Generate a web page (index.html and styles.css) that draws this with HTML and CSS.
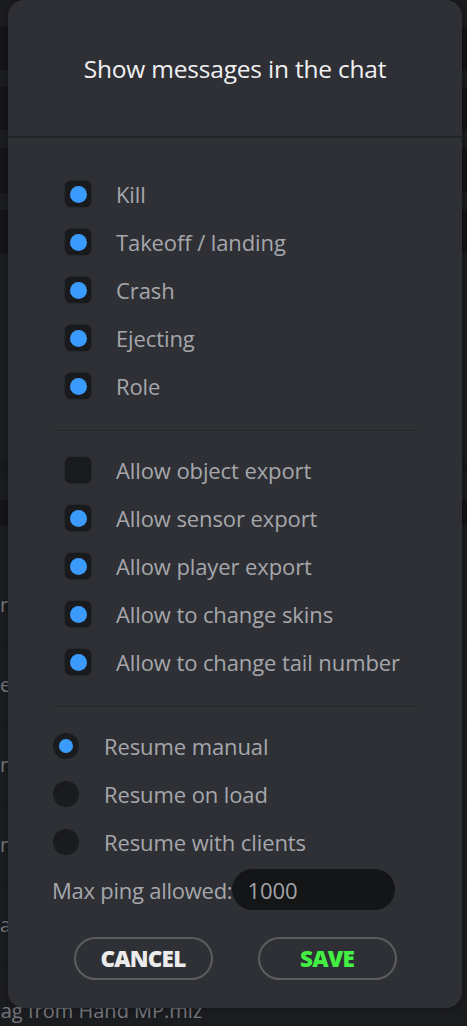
FILE: index.html
```html
<!DOCTYPE html>
<html>
<head>
<meta charset="utf-8">
<link rel="stylesheet" href="styles.css">
</head>
<body>
<div class="backdrop">
  <div class="band light h27"></div>
  <div class="band dark h43"></div>
  <div class="band light h17"></div>
  <div class="band dark h43"></div>
  <div class="band light h18"></div>
  <div class="band dark h45"></div>
  <div class="band light h17"></div>
  <div class="band dark h43"></div>
  <div class="band light h207"></div>
  <div class="band mid h13"></div>
  <div class="band light h27"></div>
  <div class="band dark h25"></div>
  <div class="band light h40"></div>
  <div class="brow">rank</div>
  <div class="brow">edit</div>
  <div class="brow">name</div>
  <div class="brow">name</div>
  <div class="brow">ag</div>
  <div class="brow last"><span class="cut">Dr</span>ag from Hand MP.miz</div>
</div>

<div class="modal">
  <div class="modal-head">
    <h1 class="title">Show messages in the chat</h1>
  </div>
  <div class="modal-body">
    <div class="group">
      <div class="row check-row"><span class="box on"></span><span class="label">Kill</span></div>
      <div class="row check-row"><span class="box on"></span><span class="label">Takeoff / landing</span></div>
      <div class="row check-row"><span class="box on"></span><span class="label">Crash</span></div>
      <div class="row check-row"><span class="box on"></span><span class="label">Ejecting</span></div>
      <div class="row check-row"><span class="box on"></span><span class="label">Role</span></div>
    </div>
    <div class="divider"></div>
    <div class="group">
      <div class="row check-row"><span class="box"></span><span class="label">Allow object export</span></div>
      <div class="row check-row"><span class="box on"></span><span class="label">Allow sensor export</span></div>
      <div class="row check-row"><span class="box on"></span><span class="label">Allow player export</span></div>
      <div class="row check-row"><span class="box on"></span><span class="label">Allow to change skins</span></div>
      <div class="row check-row"><span class="box on"></span><span class="label">Allow to change tail number</span></div>
    </div>
    <div class="divider"></div>
    <div class="group">
      <div class="row radio-row"><span class="radio on"></span><span class="label">Resume manual</span></div>
      <div class="row radio-row"><span class="radio"></span><span class="label">Resume on load</span></div>
      <div class="row radio-row"><span class="radio"></span><span class="label">Resume with clients</span></div>
    </div>
    <div class="ping">
      <span class="label narrow">Max ping allowed:</span>
      <span class="input">1000</span>
    </div>
    <div class="actions">
      <button class="btn cancel">CANCEL</button>
      <button class="btn save">SAVE</button>
    </div>
  </div>
</div>
</body>
</html>
```
FILE: styles.css
```css
html, body {
  margin: 0;
  padding: 0;
}
body {
  width: 467px;
  height: 1026px;
  overflow: hidden;
  background: #1b1c20;
  font-family: "Open Sans", "Noto Sans", sans-serif;
  position: relative;
}

/* backdrop list behind the modal */
.backdrop {
  display: flex;
  flex-direction: column;
}
.band { width: 100%; }
.light { background: #1b1c20; }
.dark { background: #131416; }
.mid { background: #17181b; }
.h13 { height: 13px; }
.h17 { height: 17px; }
.h18 { height: 18px; }
.h25 { height: 25px; }
.h27 { height: 27px; }
.h40 { height: 40px; }
.h43 { height: 43px; }
.h45 { height: 45px; }
.h207 { height: 207px; }
.brow {
  height: 80px;
  box-sizing: border-box;
  border-bottom: 1px solid #16171a;
  display: flex;
  align-items: center;
  font-size: 20px;
  color: #74767b;
  white-space: nowrap;
}
.brow.last {
  height: 61px;
  align-items: flex-end;
  padding-bottom: 2px;
  border-bottom: none;
}
.cut { margin-left: -22px; visibility: hidden; }

/* modal */
.modal {
  position: absolute;
  left: 8px;
  top: 0;
  width: 454px;
  height: 1008px;
  background: #2e3036;
  border-radius: 16px;
  box-shadow: 0 0 6px rgba(0,0,0,0.35);
  display: flex;
  flex-direction: column;
}
.modal-head {
  height: 136px;
  border-bottom: 2px solid #232529;
  display: flex;
  align-items: center;
  justify-content: center;
}
.title {
  margin: 0;
  font-size: 24.5px;
  font-weight: 400;
  color: #f1f1f2;
  letter-spacing: -0.2px;
}
.modal-body {
  padding: 32px 44px 27px;
  display: flex;
  flex-direction: column;
}
.group {
  display: flex;
  flex-direction: column;
}
.row {
  height: 48px;
  display: flex;
  align-items: center;
}
.check-row { padding-left: 13px; }
.label {
  font-size: 22px;
  color: #a6a7ab;
  white-space: nowrap;
  letter-spacing: -0.1px;
}
.label.narrow { letter-spacing: -0.25px; }
.box {
  width: 26px;
  height: 26px;
  border-radius: 6px;
  background: #191a1d;
  box-shadow: 0 0 2px rgba(0,0,0,0.5);
  margin-right: 25px;
  display: flex;
  align-items: center;
  justify-content: center;
  flex: none;
}
.box.on::after {
  content: "";
  width: 17px;
  height: 17px;
  border-radius: 50%;
  background: #3a9bfc;
}
.radio {
  width: 26px;
  height: 26px;
  border-radius: 50%;
  background: #1a1b1e;
  margin-left: 1px;
  margin-right: 25px;
  display: flex;
  align-items: center;
  justify-content: center;
  flex: none;
}
.radio.on::after {
  content: "";
  width: 14px;
  height: 14px;
  border-radius: 50%;
  background: #3a9bfc;
}
.divider {
  height: 1px;
  background: #25272b;
  margin: 20px 0 15px;
}
.ping {
  display: flex;
  align-items: center;
  margin-top: 3px;
}
.input {
  width: 163px;
  height: 41px;
  box-sizing: border-box;
  border-radius: 21px;
  background: #141517;
  font-size: 22px;
  color: #a3a4a7;
  padding-left: 15px;
  display: flex;
  align-items: center;
}
.actions {
  margin-top: 27px;
  display: flex;
  justify-content: center;
  gap: 45px;
}
.btn {
  width: 139px;
  height: 43px;
  box-sizing: border-box;
  border: 2px solid #5c5d61;
  border-radius: 22px;
  background: transparent;
  font-family: "Open Sans", "Noto Sans", sans-serif;
  font-weight: 800;
  font-size: 22.5px;
  letter-spacing: -0.8px;
  padding: 0;
  display: flex;
  align-items: center;
  justify-content: center;
}
.cancel { color: #ebebeb; }
.save { color: #42ef42; }
```
